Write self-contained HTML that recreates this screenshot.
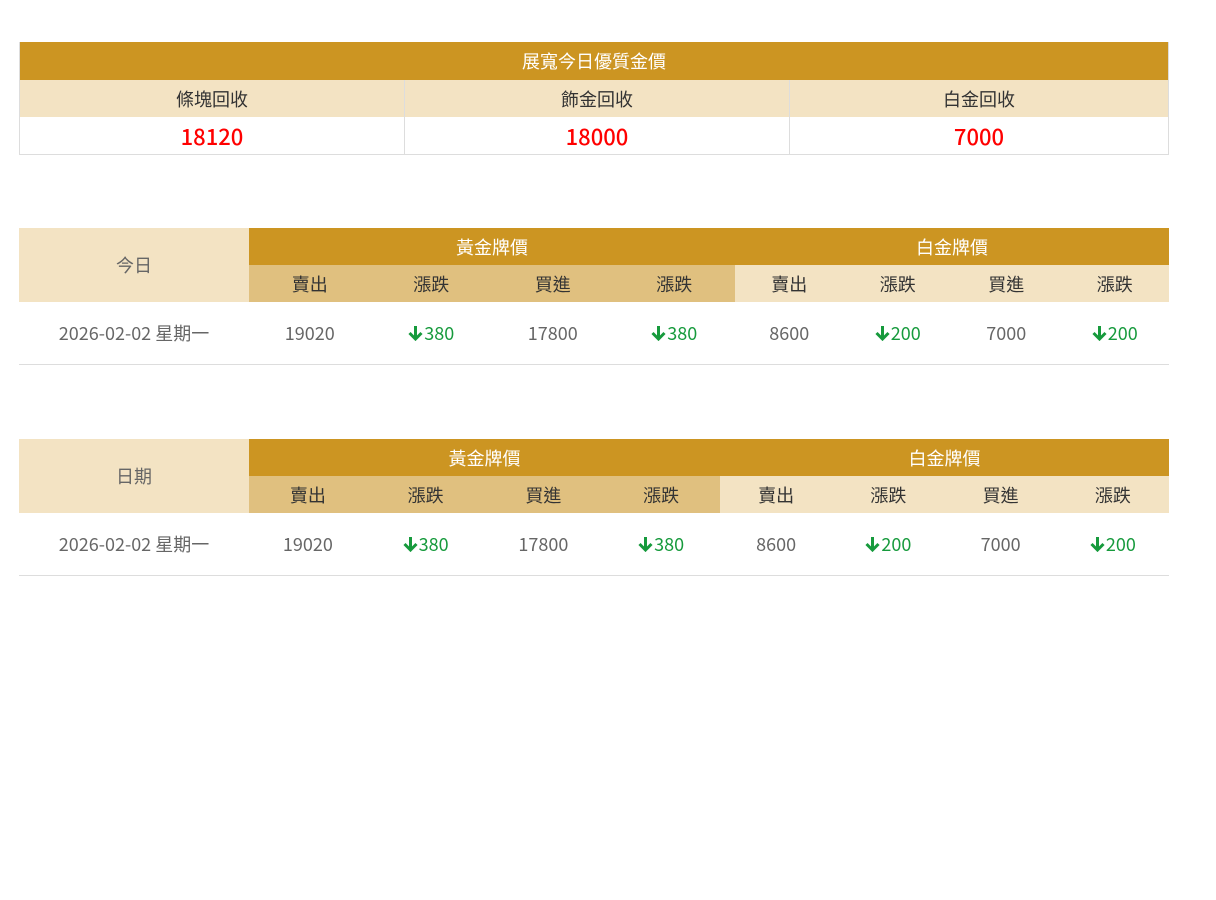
<!DOCTYPE html>
<html><head><meta charset="utf-8"><style>
body{margin:0;background:#fff;font-family:"Noto Sans CJK TC","Liberation Sans",sans-serif;}
.t{position:absolute;left:19px;width:1150px;}
.r{display:flex;}
.c{display:flex;align-items:center;justify-content:center;box-sizing:border-box;}
.g{background:#cc9522;color:#fff;font-size:18px;}
.l{background:#f3e3c3;color:#333;font-size:18px;}
.m{background:#e0c07f;color:#333;font-size:18px;}
.red{color:#f00;font-size:22px;font-weight:500;}
.d{color:#666;font-size:18px;}
.gr{color:#169a3c;font-size:18px;}
</style></head><body>
<div class="t" style="top:42px;border:1px solid #ddd;border-top:none;width:1150px;box-sizing:border-box">
 <div class="c g" style="height:38px">展寬今日優質金價</div>
 <div class="r">
  <div class="c l" style="width:385px;height:37px;border-right:1px solid #ddd">條塊回收</div>
  <div class="c l" style="width:385px;height:37px;border-right:1px solid #ddd">飾金回收</div>
  <div class="c l" style="flex:1;height:37px">白金回收</div>
 </div>
 <div class="r">
  <div class="c red" style="width:385px;height:37px;border-right:1px solid #ddd">18120</div>
  <div class="c red" style="width:385px;height:37px;border-right:1px solid #ddd">18000</div>
  <div class="c red" style="flex:1;height:37px">7000</div>
 </div>
</div>

<div class="t" style="top:228px">
 <div class="r">
  <div class="c l" style="width:230px;height:74px;color:#666">今日</div>
  <div>
   <div class="r"><div class="c g" style="width:486px;height:37px">黃金牌價</div><div class="c g" style="width:434px;height:37px">白金牌價</div></div>
   <div class="r">
    <div class="c m" style="width:121.5px;height:37px">賣出</div><div class="c m" style="width:121.5px;height:37px">漲跌</div><div class="c m" style="width:121.5px;height:37px">買進</div><div class="c m" style="width:121.5px;height:37px">漲跌</div>
    <div class="c l" style="width:108.5px;height:37px">賣出</div><div class="c l" style="width:108.5px;height:37px">漲跌</div><div class="c l" style="width:108.5px;height:37px">買進</div><div class="c l" style="width:108.5px;height:37px">漲跌</div>
   </div>
  </div>
 </div>
 <div class="r" style="height:62px;border-bottom:1px solid #ddd">
  <div class="c d" style="width:230px">2026-02-02 星期一</div>
  <div class="c d" style="width:121.5px">19020</div><div class="c gr" style="width:121.5px"><span class="ar"></span>380</div><div class="c d" style="width:121.5px">17800</div><div class="c gr" style="width:121.5px"><span class="ar"></span>380</div>
  <div class="c d" style="width:108.5px">8600</div><div class="c gr" style="width:108.5px"><span class="ar"></span>200</div><div class="c d" style="width:108.5px">7000</div><div class="c gr" style="width:108.5px"><span class="ar"></span>200</div>
 </div>
</div>

<div class="t" style="top:439px">
 <div class="r">
  <div class="c l" style="width:230px;height:74px;color:#666">日期</div>
  <div>
   <div class="r"><div class="c g" style="width:471px;height:37px">黃金牌價</div><div class="c g" style="width:449px;height:37px">白金牌價</div></div>
   <div class="r">
    <div class="c m" style="width:117.75px;height:37px">賣出</div><div class="c m" style="width:117.75px;height:37px">漲跌</div><div class="c m" style="width:117.75px;height:37px">買進</div><div class="c m" style="width:117.75px;height:37px">漲跌</div>
    <div class="c l" style="width:112.25px;height:37px">賣出</div><div class="c l" style="width:112.25px;height:37px">漲跌</div><div class="c l" style="width:112.25px;height:37px">買進</div><div class="c l" style="width:112.25px;height:37px">漲跌</div>
   </div>
  </div>
 </div>
 <div class="r" style="height:62px;border-bottom:1px solid #ddd">
  <div class="c d" style="width:230px">2026-02-02 星期一</div>
  <div class="c d" style="width:117.75px">19020</div><div class="c gr" style="width:117.75px"><span class="ar"></span>380</div><div class="c d" style="width:117.75px">17800</div><div class="c gr" style="width:117.75px"><span class="ar"></span>380</div>
  <div class="c d" style="width:112.25px">8600</div><div class="c gr" style="width:112.25px"><span class="ar"></span>200</div><div class="c d" style="width:112.25px">7000</div><div class="c gr" style="width:112.25px"><span class="ar"></span>200</div>
 </div>
</div>
<script>
document.querySelectorAll('.ar').forEach(function(e){e.outerHTML='<svg width="15" height="16" viewBox="0 0 15 16" style="margin-right:1px"><path d="M7.5 1v13M1.5 8L7.5 14l6-6" stroke="#169a3c" stroke-width="3" fill="none"/></svg>';});
</script>
</body></html>
